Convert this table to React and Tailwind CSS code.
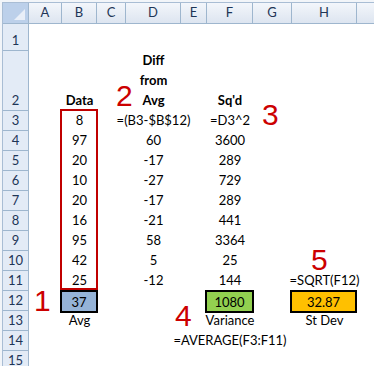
import React from "react";

// grid column / row classes written out in full so Tailwind picks them up
const COL = ["", "col-start-1", "col-start-2", "col-start-3", "col-start-4", "col-start-5", "col-start-6", "col-start-7", "col-start-8", "col-start-9", "col-start-10"];
const ROW = ["", "row-start-1", "row-start-2", "row-start-3", "row-start-4", "row-start-5", "row-start-6", "row-start-7", "row-start-8", "row-start-9", "row-start-10", "row-start-11", "row-start-12", "row-start-13", "row-start-14", "row-start-15", "row-start-16"];

const LETTERS = ["A", "B", "C", "D", "E", "F", "G", "H", ""];

// column index: 2 = A ... 9 = H ; excel row n sits on grid row n + 1
const cells = [
  { c: 3, r: 2, t: "Data", bold: true },
  { c: 7, r: 2, t: "Sq'd", bold: true },
  { c: 3, r: 3, t: "8" }, { c: 5, r: 3, t: "=(B3-$B$12)" }, { c: 7, r: 3, t: "=D3^2" },
  { c: 3, r: 4, t: "97" }, { c: 5, r: 4, t: "60" }, { c: 7, r: 4, t: "3600" },
  { c: 3, r: 5, t: "20" }, { c: 5, r: 5, t: "-17" }, { c: 7, r: 5, t: "289" },
  { c: 3, r: 6, t: "10" }, { c: 5, r: 6, t: "-27" }, { c: 7, r: 6, t: "729" },
  { c: 3, r: 7, t: "20" }, { c: 5, r: 7, t: "-17" }, { c: 7, r: 7, t: "289" },
  { c: 3, r: 8, t: "16" }, { c: 5, r: 8, t: "-21" }, { c: 7, r: 8, t: "441" },
  { c: 3, r: 9, t: "95" }, { c: 5, r: 9, t: "58" }, { c: 7, r: 9, t: "3364" },
  { c: 3, r: 10, t: "42" }, { c: 5, r: 10, t: "5" }, { c: 7, r: 10, t: "25" },
  { c: 3, r: 11, t: "25" }, { c: 5, r: 11, t: "-12" }, { c: 7, r: 11, t: "144" }, { c: 9, r: 11, t: "=SQRT(F12)" },
  { c: 3, r: 13, t: "Avg" }, { c: 7, r: 13, t: "Variance" }, { c: 9, r: 13, t: "St Dev" },
  { c: 7, r: 14, t: "=AVERAGE(F3:F11)" },
];

const Cell = ({ c, r, t, bold }) => (
  <div
    className={`${COL[c]} ${ROW[r + 1]} flex items-end justify-center pb-[4px] leading-none whitespace-nowrap text-black ${bold ? "font-bold" : ""}`}
  >
    {t}
  </div>
);

// big red step numbers laid over the sheet
const Callout = ({ n, pos }) => (
  <span className={`absolute ${pos} font-['Liberation_Sans',Arial,sans-serif] text-[30px] leading-[22px] text-[#cc0000]`}>
    {n}
  </span>
);

export default function App() {
  return (
    <div className="relative w-[374px] h-[366px] overflow-hidden bg-[#f2f5f9] pt-[2px] pl-[2px] font-['Lato',sans-serif] text-[13px]">
      <div className="grid grid-cols-[26px_33px_35px_29px_55px_26px_46px_39px_65px_1fr] grid-rows-[21px_27px_60px_repeat(13,20px)] border-t border-l border-[#a9bdd4] bg-white">
        {/* corner */}
        <div className="col-start-1 row-start-1 relative bg-[#bcd0ea] border-r border-b border-[#9eb6ce]">
          <svg className="absolute right-[3px] bottom-[3px]" width="11" height="11" viewBox="0 0 11 11">
            <polygon points="11,0 11,11 0,11" fill="#e9eff8" />
          </svg>
        </div>

        {/* column headers */}
        {LETTERS.map((l, i) => (
          <div
            key={"h" + i}
            className={`${COL[i + 2]} row-start-1 flex items-center justify-center bg-linear-to-b from-[#f3f6fb] to-[#dde5f0] border-b border-[#9eb6ce] text-[#1e3556] ${i < 8 ? "border-r" : ""}`}
          >
            {l}
          </div>
        ))}

        {/* row headers */}
        {Array.from({ length: 15 }, (_, i) => (
          <div
            key={"r" + i}
            className={`col-start-1 ${ROW[i + 2]} flex items-end justify-center pb-[3px] leading-none bg-[#e3ebf6] border-r border-b border-[#9eb6ce] text-[#1e3556]`}
          >
            {i + 1}
          </div>
        ))}

        {/* D2: three-line bold heading */}
        <div className="col-start-5 row-start-3 flex flex-col justify-end font-bold text-black">
          {["Diff", "from", "Avg"].map((w) => (
            <div key={w} className="h-[20px] flex items-end justify-center pb-[4px] leading-none">
              {w}
            </div>
          ))}
        </div>

        {cells.map((x) => (
          <Cell key={x.c + "-" + x.r} {...x} />
        ))}

        {/* red frame round the data */}
        <div className="col-start-3 row-start-4 row-end-13 -ml-[2px] -mr-[1px] -mt-[2px] mb-[1px] border-2 border-[#c00000] pointer-events-none" />

        {/* result cells */}
        <div className="col-start-3 row-start-13 -ml-[2px] -mr-[1px] -mt-[1px] -mb-[2px] flex items-end justify-center pb-[2px] leading-none border-2 border-black bg-[#95b3d7] text-black">
          37
        </div>
        <div className="col-start-7 row-start-13 -ml-[2px] -mr-[1px] -mt-[1px] -mb-[2px] flex items-end justify-center pb-[2px] leading-none border-2 border-black bg-[#92d050] text-black">
          1080
        </div>
        <div className="col-start-9 row-start-13 -ml-[2px] -mt-[1px] -mb-[2px] flex items-end justify-center pb-[2px] leading-none border-2 border-black bg-[#ffc000] text-black">
          32.87
        </div>
      </div>

      <Callout n="1" pos="left-[34px] top-[290px]" />
      <Callout n="2" pos="left-[116px] top-[85px]" />
      <Callout n="3" pos="left-[262px] top-[104px]" />
      <Callout n="4" pos="left-[175px] top-[305px]" />
      <Callout n="5" pos="left-[311px] top-[249px]" />
    </div>
  );
}
